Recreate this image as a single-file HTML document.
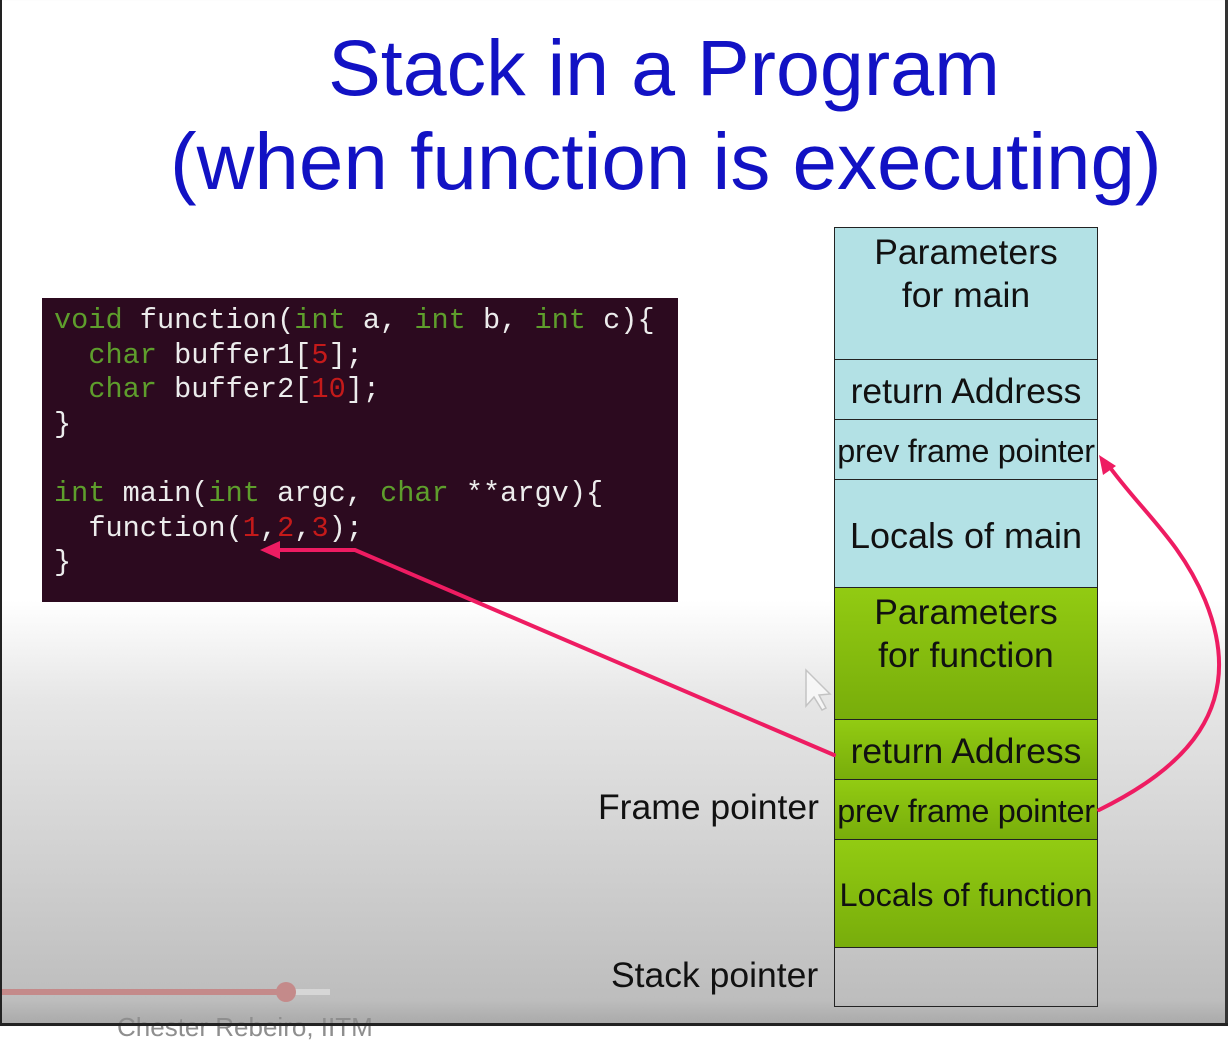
<!DOCTYPE html>
<html><head><meta charset="utf-8"><style>
html,body{margin:0;padding:0}
body{width:1228px;height:1026px;position:relative;overflow:hidden;font-family:"Liberation Sans",Arial,sans-serif;
background:linear-gradient(to bottom,#fff 0px,#fff 600px,#e6e6e6 700px,#d2d2d2 850px,#bdbdbd 1000px,#a8a8a8 1026px);}
.t{position:absolute;left:0;width:1228px;color:#1212c4;font-size:79px;white-space:nowrap}
.code{position:absolute;left:42px;top:298px;width:636px;height:304px;background:#2c0a1f;}
.code pre{margin:0;position:absolute;left:12px;top:6px;font-family:"Liberation Mono",monospace;font-size:28.6px;line-height:34.6px;color:#ececec;letter-spacing:0}
.g{color:#5e9e2c}.r{color:#c41a1a}
.c{position:absolute;left:834px;width:262px;border:1px solid #222;box-sizing:content-box;text-align:center;color:#111;font-size:35.5px;line-height:38px;white-space:nowrap}
.b{background:#b3e1e5}
.gr{background:linear-gradient(#92cb12,#78ad0b)}
.lbl{position:absolute;font-size:35.5px;color:#111;white-space:nowrap}
</style></head><body>
<div class="t" style="top:22px;text-align:center;padding-left:100px;box-sizing:border-box">Stack in a Program</div>
<div class="t" style="top:116px;left:170px;width:auto;font-size:80px">(when function is executing)</div>

<div class="code"><pre><span class="g">void</span> function(<span class="g">int</span> a, <span class="g">int</span> b, <span class="g">int</span> c){
  <span class="g">char</span> buffer1[<span class="r">5</span>];
  <span class="g">char</span> buffer2[<span class="r">10</span>];
}

<span class="g">int</span> main(<span class="g">int</span> argc, <span class="g">char</span> **argv){
  function(<span class="r">1</span>,<span class="r">2</span>,<span class="r">3</span>);
}</pre></div>

<div class="c b" style="top:227px;height:131px"><div style="padding-top:3px;line-height:43px">Parameters<br>for main</div></div>
<div class="c b" style="top:359px;height:59px;line-height:62px">return Address</div>
<div class="c b" style="top:419px;height:59px;line-height:62px;font-size:32.4px;letter-spacing:-0.3px">prev frame pointer</div>
<div class="c b" style="top:479px;height:107px;line-height:112px;font-size:36px">Locals of main</div>
<div class="c gr" style="top:587px;height:131px"><div style="padding-top:3px;line-height:43px">Parameters<br>for function</div></div>
<div class="c gr" style="top:719px;height:59px;line-height:62px">return Address</div>
<div class="c gr" style="top:779px;height:59px;line-height:62px;font-size:32.4px;letter-spacing:-0.3px">prev frame pointer</div>
<div class="c gr" style="top:839px;height:107px;line-height:110px;font-size:32.5px">Locals of function</div>
<div class="c" style="top:947px;height:58px;background:transparent"></div>

<div class="lbl" style="left:598px;top:787px">Frame pointer</div>
<div class="lbl" style="left:611px;top:955px">Stack pointer</div>
<div style="position:absolute;left:117px;top:1012px;font-size:26px;color:#8e8e8e">Chester Rebeiro, IITM</div>

<svg width="1228" height="1026" style="position:absolute;left:0;top:0" viewBox="0 0 1228 1026">
<g fill="none" stroke="#ee1c62" stroke-width="4" stroke-linecap="round">
<path d="M834 755 L355 550 L275 550"/>
<path d="M1099 810 C1180 770 1250 710 1205 600 C1180 540 1140 510 1106 462"/>
</g>
<polygon points="260,550 280,541 280,559" fill="#ee1c62"/>
<polygon points="1099,455 1103,475 1116,466" fill="#ee1c62"/>
<path d="M806 670 L806 706 L814 697 L822 710 L826 708 L819 695 L830 694 Z" fill="#fafafa" stroke="#bbb" stroke-width="1.5" opacity="0.8"/>
<line x1="0" y1="992" x2="286" y2="992" stroke="#c48a8a" stroke-width="6"/>
<line x1="286" y1="992" x2="330" y2="992" stroke="#d6d6d6" stroke-width="6"/>
<circle cx="286" cy="992" r="10" fill="#c48a8a"/>
<rect x="0" y="0" width="2" height="1026" fill="#222"/>
<rect x="1225" y="0" width="3" height="1026" fill="#333"/>
<rect x="0" y="1023" width="1228" height="3" fill="#222"/>
</svg>
</body></html>
